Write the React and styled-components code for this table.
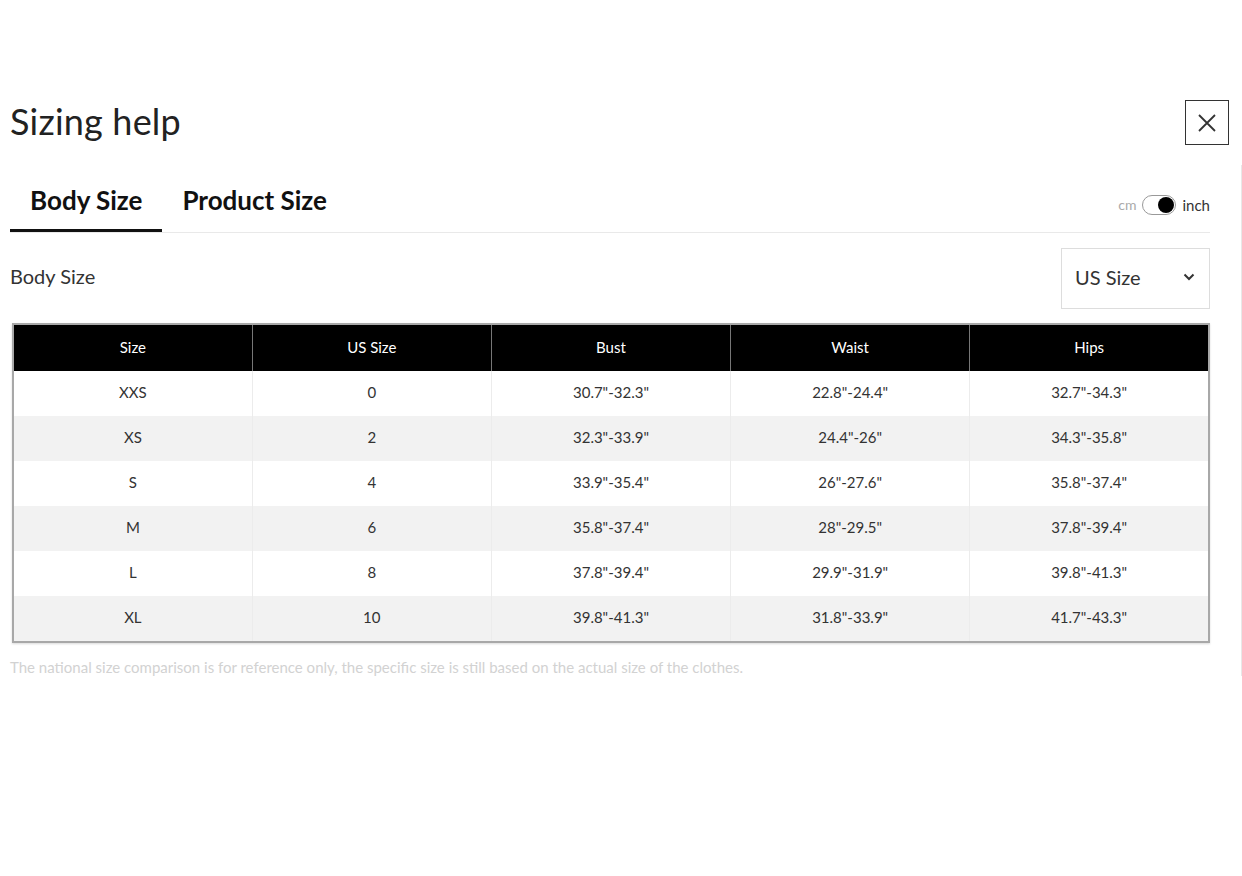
import React, { useState } from 'react';
import styled, { createGlobalStyle } from 'styled-components';

const GlobalStyle = createGlobalStyle`
  html, body {
    margin: 0;
    padding: 0;
    background: #fff;
    font-family: Lato, "Open Sans", sans-serif;
    color: #222;
  }
`;

const Page = styled.div`
  padding-top: 100px;
  width: 1242px;
`;

const Header = styled.div`
  display: flex;
  align-items: center;
  justify-content: space-between;
  height: 45px;
  padding: 0 13px 0 10px;
`;

const Title = styled.h1`
  margin: 0 0 3px;
  font-size: 36px;
  font-weight: 400;
  color: #222;
  letter-spacing: 0.2px;
`;

const CloseButton = styled.button`
  width: 44px;
  height: 45px;
  border: 1.5px solid #333;
  background: #fff;
  display: flex;
  align-items: center;
  justify-content: center;
  padding: 0;
  cursor: pointer;
`;

const Body = styled.div`
  margin-top: 20px;
  padding: 0 31px 0 10px;
  border-right: 1px solid #e8e8e8;
  min-height: 507px;
`;

const TabRow = styled.div`
  display: flex;
  align-items: stretch;
  justify-content: space-between;
  border-bottom: 1px solid #e9e9e9;
  height: 67px;
`;

const Tabs = styled.div`
  display: flex;
`;

const Tab = styled.div`
  padding: 6px 20px 0;
  display: flex;
  align-items: center;
  font-size: 26px;
  font-weight: 700;
  color: #111;
  border-bottom: 3px solid ${p => (p.active ? '#111' : 'transparent')};
  cursor: pointer;
`;

const UnitToggle = styled.div`
  display: flex;
  align-items: center;
  gap: 6px;
  padding-top: 12px;
`;

const UnitLabel = styled.span`
  font-size: ${p => (p.active ? '15px' : '14px')};
  color: ${p => (p.active ? '#333' : '#aaa')};
`;

const Switch = styled.div`
  width: 34px;
  height: 20px;
  box-sizing: border-box;
  border: 1px solid #999;
  border-radius: 10px;
  display: flex;
  align-items: center;
  justify-content: ${p => (p.on ? 'flex-end' : 'flex-start')};
  padding: 0 1px;
`;

const Knob = styled.div`
  width: 16px;
  height: 16px;
  border-radius: 50%;
  background: #000;
`;

const FilterRow = styled.div`
  display: flex;
  align-items: center;
  justify-content: space-between;
  margin-top: 15px;
`;

const SectionLabel = styled.div`
  font-size: 20px;
  color: #333;
  padding-bottom: 5px;
`;

const Select = styled.div`
  width: 149px;
  height: 61px;
  box-sizing: border-box;
  border: 1px solid #ddd;
  display: flex;
  align-items: center;
  justify-content: space-between;
  padding: 0 14px 3px 13px;
  font-size: 20px;
  color: #333;
`;

const Table = styled.table`
  margin: 14px 0 0 2px;
  width: 1198px;
  border-collapse: collapse;
  border: 2px solid #a8a8a8;
  box-shadow: 0 1px 2px rgba(0, 0, 0, 0.15);
  table-layout: fixed;
`;

const HeadCell = styled.th`
  background: #000;
  color: #fff;
  font-weight: 400;
  font-size: 15px;
  height: 43px;
  padding: 0 0 3px;
  border-left: 1px solid #777;
  &:first-child {
    border-left: none;
  }
`;

const Row = styled.tr`
  background: ${p => (p.shaded ? '#f2f2f2' : '#fff')};
`;

const Cell = styled.td`
  text-align: center;
  font-size: 15px;
  color: #333;
  height: 42px;
  padding: 0 0 3px;
  border-left: 1px solid #ececec;
  &:first-child {
    border-left: none;
  }
`;

const Note = styled.p`
  margin: 15px 0 0;
  font-size: 15px;
  color: #d2d2d2;
`;

const columns = ['Size', 'US Size', 'Bust', 'Waist', 'Hips'];

const rows = [
  ['XXS', '0', '30.7"-32.3"', '22.8"-24.4"', '32.7"-34.3"'],
  ['XS', '2', '32.3"-33.9"', '24.4"-26"', '34.3"-35.8"'],
  ['S', '4', '33.9"-35.4"', '26"-27.6"', '35.8"-37.4"'],
  ['M', '6', '35.8"-37.4"', '28"-29.5"', '37.8"-39.4"'],
  ['L', '8', '37.8"-39.4"', '29.9"-31.9"', '39.8"-41.3"'],
  ['XL', '10', '39.8"-41.3"', '31.8"-33.9"', '41.7"-43.3"'],
];

export default function App() {
  const [tab, setTab] = useState('body');
  const [inch, setInch] = useState(true);

  return (
    <Page>
      <GlobalStyle />
      <Header>
        <Title>Sizing help</Title>
        <CloseButton aria-label="Close">
          <svg width="20" height="20" viewBox="0 0 20 20">
            <path d="M2 2 L18 18 M18 2 L2 18" stroke="#333" strokeWidth="1.8" fill="none" />
          </svg>
        </CloseButton>
      </Header>
      <Body>
        <TabRow>
          <Tabs>
            <Tab active={tab === 'body'} onClick={() => setTab('body')}>Body Size</Tab>
            <Tab active={tab === 'product'} onClick={() => setTab('product')}>Product Size</Tab>
          </Tabs>
          <UnitToggle onClick={() => setInch(!inch)}>
            <UnitLabel active={!inch}>cm</UnitLabel>
            <Switch on={inch}>
              <Knob />
            </Switch>
            <UnitLabel active={inch}>inch</UnitLabel>
          </UnitToggle>
        </TabRow>
        <FilterRow>
          <SectionLabel>Body Size</SectionLabel>
          <Select>
            US Size
            <svg width="12" height="8" viewBox="0 0 12 8">
              <path d="M1.5 1.5 L6 6 L10.5 1.5" stroke="#333" strokeWidth="2" fill="none" />
            </svg>
          </Select>
        </FilterRow>
        <Table>
          <thead>
            <tr>
              {columns.map(c => (
                <HeadCell key={c}>{c}</HeadCell>
              ))}
            </tr>
          </thead>
          <tbody>
            {rows.map((r, i) => (
              <Row key={r[0]} shaded={i % 2 === 1}>
                {r.map((v, j) => (
                  <Cell key={j}>{v}</Cell>
                ))}
              </Row>
            ))}
          </tbody>
        </Table>
        <Note>
          The national size comparison is for reference only, the specific size is still based on the actual size of the clothes.
        </Note>
      </Body>
    </Page>
  );
}
